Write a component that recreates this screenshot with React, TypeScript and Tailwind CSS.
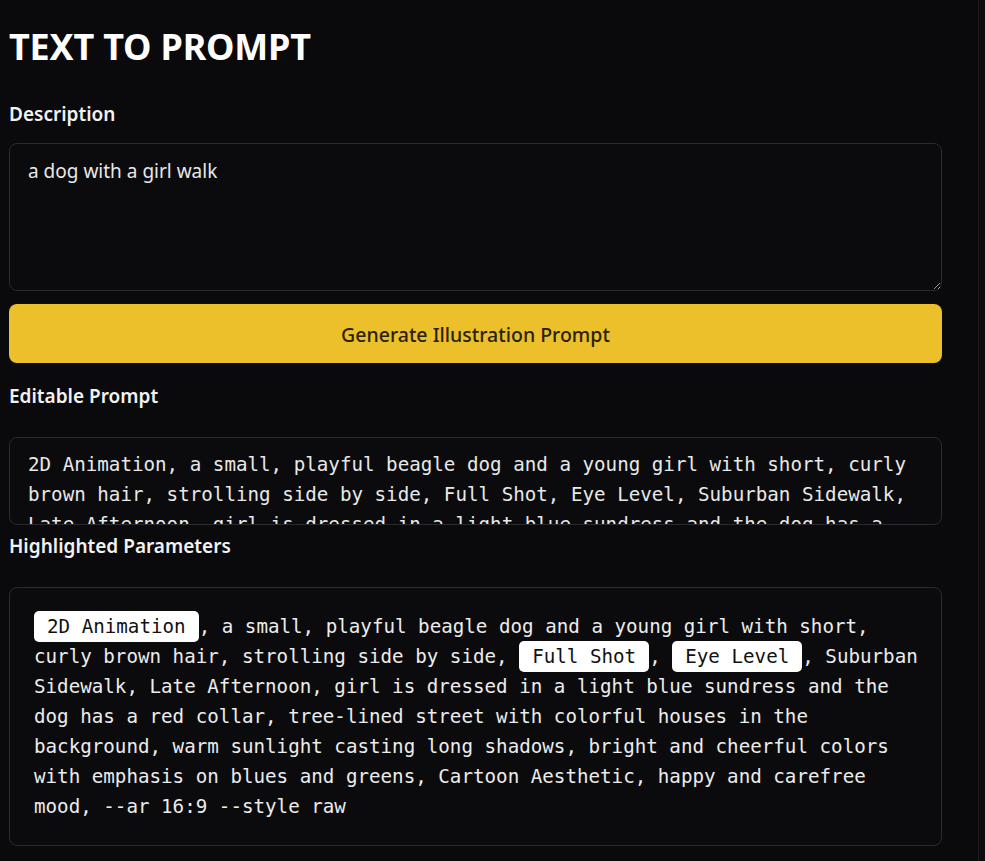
import React, { useState } from 'react';

const ui = { fontFamily: '"Noto Sans", "Open Sans", sans-serif' };
const mono = { fontFamily: '"DejaVu Sans Mono", "Liberation Mono", monospace' };

const promptText =
  '2D Animation, a small, playful beagle dog and a young girl with short, curly brown hair, strolling side by side, Full Shot, Eye Level, Suburban Sidewalk, Late Afternoon, girl is dressed in a light blue sundress and the dog has a red collar, tree-lined street with colorful houses in the background, warm sunlight casting long shadows, bright and cheerful colors with emphasis on blues and greens, Cartoon Aesthetic, happy and carefree mood, --ar 16:9 --style raw';

const params = ['2D Animation', 'Full Shot', 'Eye Level'];

// split prompt into plain text and highlighted chips
function highlight(text: string) {
  const parts: React.ReactNode[] = [];
  let rest = text;
  let key = 0;
  while (rest.length) {
    let idx = -1;
    let hit = '';
    for (const p of params) {
      const i = rest.indexOf(p);
      if (i !== -1 && (idx === -1 || i < idx)) {
        idx = i;
        hit = p;
      }
    }
    if (idx === -1) {
      parts.push(rest);
      break;
    }
    if (idx > 0) parts.push(rest.slice(0, idx));
    parts.push(
      <span key={key++} className="bg-white text-[#111] rounded-[5px] px-[13px] py-[4px]">
        {hit}
      </span>
    );
    rest = rest.slice(idx + hit.length);
  }
  return parts;
}

export default function App() {
  const [description, setDescription] = useState('a dog with a girl walk');
  const [prompt, setPrompt] = useState(promptText);

  return (
    <div className="min-h-[861px] bg-[#0a0a0c] flex" style={ui}>
      <div className="w-[979px] border-r border-[#1e1e22] pl-[9px] pt-[22px]">
        <div className="w-[933px] flex flex-col">
          <h1 className="text-[36px] font-bold text-white leading-[50px] tracking-[-0.2px]">TEXT TO PROMPT</h1>

          <label className="mt-[28px] text-[19px] font-semibold text-[#f2f2f2] leading-[28px]">Description</label>
          <textarea
            value={description}
            onChange={e => setDescription(e.target.value)}
            className="mt-[15px] h-[148px] rounded-[8px] border border-[#2a2a2f] bg-[#0b0b0d] px-[18px] py-[13px] text-[19px] text-[#e8e8e8] leading-[28px] outline-none resize-y"
            style={ui}
          />

          <button className="mt-[13px] h-[59px] rounded-[8px] bg-[#ebc02a] pt-[3px] text-[19.5px] font-medium text-[#2a2106]">
            Generate Illustration Prompt
          </button>

          <label className="mt-[19px] text-[19px] font-semibold text-[#f2f2f2] leading-[28px]">Editable Prompt</label>
          <textarea
            value={prompt}
            onChange={e => setPrompt(e.target.value)}
            className="mt-[27px] h-[88px] rounded-[8px] border border-[#2a2a2f] bg-[#0b0b0d] px-[18px] pt-[12px] pb-0 text-[19.2px] text-[#e8e8e8] leading-[30px] outline-none resize-none overflow-hidden"
            style={mono}
          />

          <label className="mt-[7px] text-[19px] font-semibold text-[#f2f2f2] leading-[28px]">Highlighted Parameters</label>
          <div
            className="mt-[27px] rounded-[8px] border border-[#2a2a2f] bg-[#0b0b0d] pl-[24px] pr-[16px] pt-[24px] pb-[23px] text-[19.2px] text-[#ececec] leading-[30px]"
            style={mono}
          >
            {highlight(prompt)}
          </div>
        </div>
      </div>
      <div className="flex-1 bg-[#0d0d0f]" />
    </div>
  );
}
